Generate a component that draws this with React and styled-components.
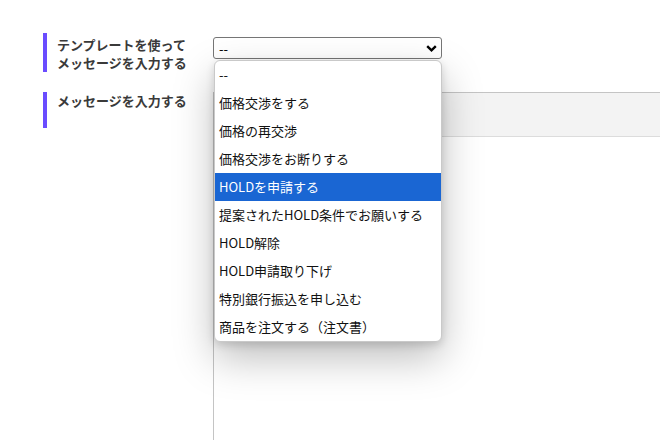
import React from 'react'
import styled, { createGlobalStyle } from 'styled-components'

const GlobalStyle = createGlobalStyle`
  html, body {
    margin: 0;
    padding: 0;
    background: #fff;
    overflow: hidden;
  }
  body {
    font-family: "Noto Sans CJK JP", "Noto Sans", sans-serif;
  }
`

const templates = [
  '--',
  '価格交渉をする',
  '価格の再交渉',
  '価格交渉をお断りする',
  'HOLDを申請する',
  '提案されたHOLD条件でお願いする',
  'HOLD解除',
  'HOLD申請取り下げ',
  '特別銀行振込を申し込む',
  '商品を注文する（注文書）',
]

const Form = styled.div`
  display: grid;
  grid-template-columns: 170px 1fr;
  align-items: start;
  row-gap: 20px;
  padding: 33px 0 0 43px;
  width: 800px;
`

const Label = styled.div`
  border-left: 4px solid #6a4cff;
  padding: ${(p) => p.$top}px 0 0 10px;
  min-height: 36px;
  box-sizing: border-box;
  font-size: 13px;
  font-weight: 700;
  line-height: 18px;
  color: #3a3a3a;
`

const SelectWrap = styled.div`
  position: relative;
  width: 229px;
  margin-top: 4px;
  z-index: 5;
`

const SelectBox = styled.select`
  appearance: none;
  display: block;
  width: 229px;
  height: 22px;
  box-sizing: border-box;
  border: 1px solid #767676;
  border-radius: 3px;
  background: #fff;
  padding: 0 0 0 5px;
  font-family: "Noto Sans CJK JP", "Noto Sans", sans-serif;
  font-size: 13px;
  color: #000;
  outline: none;
`

const Chevron = styled.svg`
  position: absolute;
  right: 5px;
  top: 8px;
  pointer-events: none;
`

const Menu = styled.ul`
  position: absolute;
  left: 1px;
  top: 23px;
  width: 228px;
  margin: 0;
  padding: 0;
  list-style: none;
  box-sizing: border-box;
  background: #fff;
  border: 1px solid #c9c9c9;
  border-radius: 6px;
  overflow: hidden;
  box-shadow: 0 16px 40px rgba(0, 0, 0, 0.26), 0 3px 8px rgba(0, 0, 0, 0.14);
`

const Option = styled.li`
  height: 28px;
  line-height: 27px;
  padding-left: 4px;
  font-size: 13px;
  white-space: nowrap;
  color: ${(p) => (p.$active ? '#fff' : '#111')};
  background: ${(p) => (p.$active ? '#1a66d3' : 'transparent')};
`

const Editor = styled.div`
  width: 600px;
  height: 420px;
  border: 1px solid #c4c4c4;
  border-right: none;
  border-bottom: none;
  box-sizing: border-box;
  display: flex;
  flex-direction: column;
`

const Toolbar = styled.div`
  height: 43px;
  background: #f3f3f3;
  border-bottom: 1px solid #dcdcdc;
`

const Body = styled.div`
  flex: 1;
  background: #fff;
`

export default function App() {
  return (
    <>
      <GlobalStyle />
      <Form>
        <Label $top={3}>
          テンプレートを使って
          <br />
          メッセージを入力する
        </Label>
        <SelectWrap>
          <SelectBox defaultValue="--">
            {templates.map((t) => (
              <option key={t}>{t}</option>
            ))}
          </SelectBox>
          <Chevron width="11" height="7" viewBox="0 0 11 7">
            <path d="M1.2 1.2 L5.5 5.3 L9.8 1.2" fill="none" stroke="#000" strokeWidth="2.4" />
          </Chevron>
          <Menu>
            {templates.map((t) => (
              <Option key={t} $active={t === 'HOLDを申請する'}>
                {t}
              </Option>
            ))}
          </Menu>
        </SelectWrap>
        <Label $top={0}>メッセージを入力する</Label>
        <Editor>
          <Toolbar />
          <Body />
        </Editor>
      </Form>
    </>
  )
}
